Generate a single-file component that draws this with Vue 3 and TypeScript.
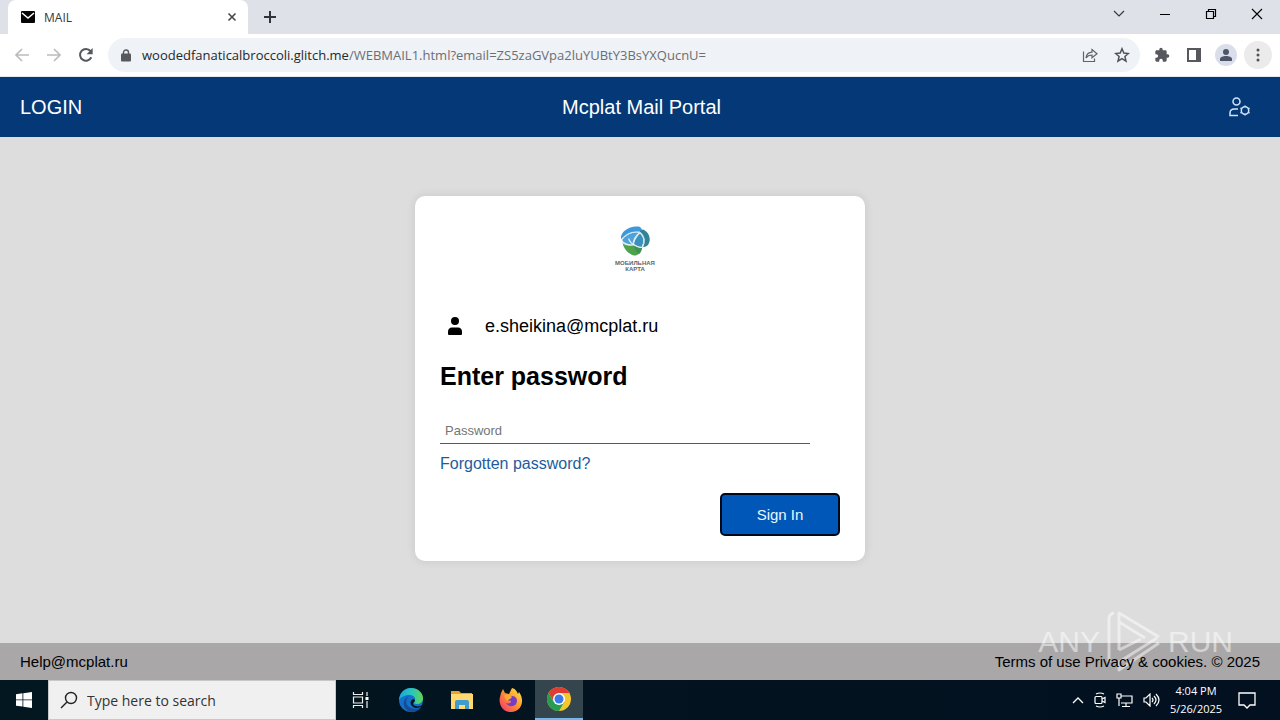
<script setup lang="ts">
import { ref } from 'vue'

const address = ref('woodedfanaticalbroccoli.glitch.me')
const path = ref('/WEBMAIL1.html?email=ZS5zaGVpa2luYUBtY3BsYXQucnU=')
const password = ref('')
const query = ref('')
</script>

<template>
  <div class="desktop">
    <header class="browser">
      <div class="tabs">
        <div class="tab">
          <svg width="14" height="12" viewBox="0 0 14 12"><rect width="14" height="12" rx="1" fill="#050505" /><path d="M1 2l6 5 6-5" fill="none" stroke="#fff" stroke-width="1.5" /></svg>
          <span class="tab-title">MAIL</span>
          <button class="icon close" aria-label="Close tab"><svg width="10" height="10" viewBox="0 0 10 10"><path d="M1.5 1.5l7 7M8.500 1.5l-7 7" stroke="#45484c" stroke-width="1.600" /></svg></button>
        </div>
        <button class="icon plus" aria-label="New tab"><svg width="14" height="14" viewBox="0 0 14 14"><path d="M7 1v12M1 7h12" stroke="#303338" stroke-width="2" /></svg></button>
        <div class="window-buttons">
          <button class="icon" aria-label="Search tabs"><svg width="12" height="12" viewBox="0 0 12 12"><path d="M1 3l5 5 5-5" fill="none" stroke="#333" stroke-width="1.100" /></svg></button>
          <button class="icon" aria-label="Minimize"><svg width="12" height="12" viewBox="0 0 12 12"><path d="M1 6.500h10" stroke="#000" /></svg></button>
          <button class="icon" aria-label="Restore"><svg width="12" height="12" viewBox="0 0 12 12"><path d="M1.500 3.500h7v7h-7zM3.500 3.500v-2h7v7h-2" fill="none" stroke="#000" stroke-width="1.200" /></svg></button>
          <button class="icon" aria-label="Close"><svg width="12" height="12" viewBox="0 0 12 12"><path d="M1 1l10 10M11 1L1 11" stroke="#000" stroke-width="1.100" /></svg></button>
        </div>
      </div>
      <div class="toolbar">
        <div class="nav">
          <button class="icon" aria-label="Back"><svg width="16" height="16" viewBox="0 0 16 16"><path d="M15 8H2M8 2L2 8l6 6" fill="none" stroke="#babcbe" stroke-width="1.700" /></svg></button>
          <button class="icon" aria-label="Forward"><svg width="16" height="16" viewBox="0 0 16 16"><path d="M1 8h13M8 2l6 6-6 6" fill="none" stroke="#babcbe" stroke-width="1.700" /></svg></button>
          <button class="icon" aria-label="Reload"><svg width="16" height="16" viewBox="0 0 16 16"><path d="M13.300 10.300A5.900 5.900 0 1 1 12.500 4" fill="none" stroke="#54575b" stroke-width="2" /><path d="M14.700 1v6.200H8.500z" fill="#54575b" /></svg></button>
        </div>
        <div class="omnibox">
          <svg width="10" height="13" viewBox="0 0 10 13"><rect y="4.500" width="10" height="8" rx="1" fill="#56595d" /><path d="M2.500 5V3.500a2.500 2.500 0 0 1 5 0V5" fill="none" stroke="#56595d" stroke-width="1.400" /></svg>
          <span class="url">{{ address }}<span class="path">{{ path }}</span></span>
          <button class="icon" aria-label="Share"><svg width="16" height="16" viewBox="0 0 16 16"><path d="M1.500 4.500v10h11v-3M4 11c.4-4 2.500-5.500 6-5.800V2.500L15 6.700l-5 4V8C7.500 8 5.500 8.700 4 11z" fill="none" stroke="#606367" stroke-width="1.200" /></svg></button>
          <button class="icon" aria-label="Bookmark"><svg width="16" height="16" viewBox="0 0 16 16"><path d="M8 1.800l1.800 4.300 4.600.4-3.500 3 1.100 4.600-4-2.500-4 2.500 1.100-4.600-3.500-3 4.600-.4z" fill="none" stroke="#505358" stroke-width="1.500" /></svg></button>
        </div>
        <div class="tools">
          <button class="icon" aria-label="Extensions"><svg width="16" height="16" viewBox="0 0 24 24"><path fill="#55585d" d="M20.500 11H19V7c0-1.100-.9-2-2-2h-4V3.500a2.500 2.500 0 0 0-5 0V5H4c-1.100 0-2 .9-2 2v3.800h1.500a2.700 2.700 0 0 1 0 5.400H2V20c0 1.100.9 2 2 2h3.800v-1.500a2.700 2.700 0 0 1 5.400 0V22H17c1.100 0 2-.9 2-2v-4h1.500a2.500 2.500 0 0 0 0-5z" /></svg></button>
          <button class="icon" aria-label="Side panel"><svg width="16" height="16" viewBox="0 0 16 16"><path d="M2 2h12v12H2z" fill="none" stroke="#55585d" stroke-width="2" /><path d="M10 2h4v12h-4z" fill="#55585d" /></svg></button>
          <button class="icon profile" aria-label="Profile"><svg width="12" height="12" viewBox="0 0 12 12"><circle cx="6" cy="3" r="3" fill="#4e5568" /><path d="M0 12v-2c0-2 3-3 6-3s6 1 6 3v2z" fill="#4e5568" /></svg></button>
          <button class="icon more" aria-label="Menu"><svg width="4" height="14" viewBox="0 0 4 14"><g fill="#505257"><circle cx="2" cy="2" r="1.500" /><circle cx="2" cy="7" r="1.500" /><circle cx="2" cy="12" r="1.500" /></g></svg></button>
        </div>
      </div>
    </header>

    <div class="portal">
      <nav class="banner">
        <span>LOGIN</span>
        <span class="banner-title">Mcplat Mail Portal</span>
        <button class="icon settings" aria-label="Account settings"><svg width="22" height="20" viewBox="0 0 22 20" fill="none" stroke="#cfe4fa" stroke-width="1.500"><circle cx="7.500" cy="4.500" r="3.500" /><path d="M9 12H5.500C2.500 12 1 13.800 1 16v2.500h8" /><circle cx="16" cy="13.500" r="3.700" /><path d="M16 8.500v1M16 17.500v1M11.500 11l1 .6M19.500 15.400l1 .6M20.500 11l-1 .6M12.500 15.400l-1 .6" /></svg></button>
      </nav>

      <main class="stage">
        <form class="card" @submit.prevent>
          <div class="brand">
            <svg width="30" height="30" viewBox="0 0 30 30">
              <path d="M1 13C0 6 9 0 17 .5c4 0 5 2 5 5C14 5 6 8 1 13z" fill="#3d98dc" />
              <path d="M2 13.500C7 8 14 5.500 20 6.500c-3 3-6 6-7 12C8 18.500 3 17 2 13.500z" fill="#4da2dc" />
              <path d="M23 3.500c5 2 7.500 7 6.500 12-1 4-3 5-7 6C25 15 24 9 19.500 6c.5-1.500 2-2.500 3.500-2.500z" fill="#328393" />
              <path d="M20 7.500c4 3.500 4 9 1.500 13.500-3 0-5-1-7.500-3 .5-4 3-7.500 6-10.500z" fill="#3b90bd" />
              <path d="M2.500 16c3 3 7 3.500 11 3 2.500 2 5 3 8.500 3-1 5-4 7.500-8 7.500C8 28 3 22 2.500 16z" fill="#4da24c" />
              <path d="M14 19c2.500 2 5 3 8 3-.5 3-1.500 5-3 6-3-2-5-5-5-9z" fill="#3e9254" />
              <path d="M1.500 14C6 8 13 5 20 6.500c5 4 5.500 9 2.500 15-5 0-12-3-14-9M20 6.500c-4 3-7 7-7 12.500-5 .5-9-.5-11-3" fill="none" stroke="#d9eff2" stroke-width="1.100" />
            </svg>
            <span class="brand-name">МОБИЛЬНАЯ<br />КАРТА</span>
          </div>
          <div class="account">
            <svg width="14" height="18" viewBox="0 0 14 18"><circle cx="7" cy="4" r="4" /><path d="M1 18a1 1 0 0 1-1-1v-2c0-3 1.500-4.500 4-4.500h6c2.500 0 4 1.500 4 4.500v2a1 1 0 0 1-1 1z" /></svg>
            <span>e.sheikina@mcplat.ru</span>
          </div>
          <h1><label for="password">Enter password</label></h1>
          <input id="password" v-model="password" class="password" type="password" placeholder="Password" autocomplete="off" />
          <a class="forgot" href="#">Forgotten password?</a>
          <button class="sign-in" type="submit">Sign In</button>
        </form>
      </main>

      <footer class="legal">
        <div class="watermark" aria-hidden="true">
          <span>ANY</span>
          <svg width="56" height="64" viewBox="0 0 56 64" fill="none" stroke="#fff" stroke-width="3" stroke-linejoin="round"><path d="M3 52V9q0-5 5-6M13 40V3l40 24M13 12l26 16M53 33L13 60V52l38-24M13 40l22-11" /></svg>
          <span>RUN</span>
        </div>
        <span class="legal-text">Help@mcplat.ru</span>
        <span class="legal-text">Terms of use Privacy &amp; cookies. © 2025</span>
      </footer>
    </div>

    <div class="taskbar">
      <button class="task start" aria-label="Start"><svg width="16" height="16" viewBox="0 0 16 16"><path d="M0 2.200l6.500-.9v6.200H0zM7.300 1.200L16 0v7.500H7.300zM0 8.300h6.500v6.300L0 13.700zM7.300 8.300H16V16l-8.700-1.200z" fill="#fff" /></svg></button>
      <label class="search">
        <svg width="18" height="18" viewBox="0 0 18 18"><circle cx="11" cy="7" r="5.500" fill="none" stroke="#222" stroke-width="1.400" /><path d="M7 11l-6 6" stroke="#222" stroke-width="1.400" /></svg>
        <input v-model="query" type="text" placeholder="Type here to search" aria-label="Type here to search" />
      </label>
      <button class="task" aria-label="Task view"><svg width="18" height="16" viewBox="0 0 18 16" fill="none" stroke="#eee" stroke-width="1.200"><path d="M1.500 0v2.500h9V0M1.500 16v-2.500h9V16M1.500 5h9v6h-9zM15 0v4M15 9v7" /><path d="M13.500 5h3v3h-3z" fill="#fff" stroke="none" /></svg></button>
      <button class="task gap" aria-label="Edge"><svg width="24" height="24" viewBox="0 0 24 24"><defs><linearGradient id="edge-top"><stop stop-color="#18a8df" /><stop offset=".55" stop-color="#2bc6bc" /><stop offset="1" stop-color="#61d64c" /></linearGradient></defs><circle cx="12" cy="12" r="12" fill="#1470c8" /><path d="M0 12C1 4 6 0 12 0c7 0 12 5 12 10 0 4-3 6-6 6-2 0-4-1-3-2 3-3 0-7-4-7-5 0-9 2-11 5z" fill="url(#edge-top)" /><path d="M10 8c-4 3-5 12 6 13 3 0 5-1 6-2-3 5-8 6-13 4-5-3-7-11 1-15z" fill="#154c98" /><path d="M14 11c-4 2-3 8 3 9 3 0 5-1 6-3-2 1-4 2-6 1-2 0-3-1-3-3 3-1 2-4 0-4z" fill="#03151f" /></svg></button>
      <button class="task" aria-label="Files"><svg width="22" height="20" viewBox="0 0 22 20"><path d="M0 1h8l2 2h11v6H0z" fill="#e4a32e" /><path d="M0 4h22v15H0z" fill="#ffd96d" /><path d="M4 19v-7q0-2 2-2h10q2 0 2 2v7h-4v-4H8v4z" fill="#409bd0" /></svg></button>
      <button class="task" aria-label="Firefox"><svg width="24" height="24" viewBox="0 0 24 24"><defs><linearGradient id="fox" x1="1" y1="0" x2="0" y2="1"><stop stop-color="#ffef48" /><stop offset=".45" stop-color="#ff982c" /><stop offset="1" stop-color="#f32a78" /></linearGradient></defs><path d="M2 5l2-4 2 4 4 1 3-6c4 1 5 4 6 6l1-2c6 8 3 19-7 20C4 25-1 16 1 9z" fill="url(#fox)" /><path d="M9 9l5-1c4 1 5 5 3 8s-8 3-10-1c3 1 5 0 5-2-2 0-4-1-3-4z" fill="#763cc6" /><path d="M5 8c3-3 6 0 8 1-2 3-4 2-5 4z" fill="#ffad32" /></svg></button>
      <button class="task active" aria-label="Chrome"><svg width="24" height="24" viewBox="0 0 24 24"><circle cx="12" cy="12" r="12" fill="#f6c72b" /><path d="M1.600 6A12 12 0 0 1 22.400 6H12L7 15z" fill="#df3d32" /><path d="M1.600 6A12 12 0 0 0 12 24l5.200-9H6.800z" fill="#269d50" /><circle cx="12" cy="12" r="6" fill="#fff" /><circle cx="12" cy="12" r="4.500" fill="#3979e9" /></svg></button>
      <div class="tray">
        <svg width="12" height="7" viewBox="0 0 12 7"><path d="M1 6l5-5 5 5" fill="none" stroke="#fff" stroke-width="1.300" /></svg>
        <svg width="12" height="16" viewBox="0 0 12 16" fill="none" stroke="#fff" stroke-width="1.200"><rect x="1" y="4.500" width="7" height="7" rx="1" /><path d="M8 7l3-1.500v5L8 9M2 2q4-2 8 0M2 14q4 2 8 0" /></svg>
        <svg width="17" height="15" viewBox="0 0 17 15" fill="none" stroke="#fff" stroke-width="1.200"><path d="M5 3h11v7H5M10 10v3M6 13.500h8M1 1h4v4H1zM3 5v8" /></svg>
        <svg width="17" height="14" viewBox="0 0 17 14" fill="none" stroke="#fff" stroke-width="1.200"><path d="M1 5h2l4-4v12L3 9H1zM9 5q2 2 0 4M11 3q4 4 0 8M13 1q6 6 0 12" /></svg>
        <div class="clock"><span>4:04 PM</span><span>5/26/2025</span></div>
        <button class="icon" aria-label="Notifications"><svg width="18" height="17" viewBox="0 0 18 17"><path d="M1 1h16v12h-5l-3 3-3-3H1z" fill="none" stroke="#fff" stroke-width="1.300" /></svg></button>
      </div>
    </div>
  </div>
</template>

<style>
html, body { margin: 0; background: #ddd; }
</style>

<style scoped>
* { box-sizing: border-box; }
.desktop { display: flex; flex-direction: column; min-height: 100vh; font-family: "Liberation Sans", Arial, sans-serif; color: #000; }
button, input { font-family: inherit; margin: 0; }
svg { display: block; flex: none; }
.icon { display: grid; place-items: center; flex: none; padding: 0; border: 0; background: transparent; }
.browser { height: 77px; background: #fff; border-bottom: 1px solid #e2e9f1; font-family: "Open Sans", sans-serif; }
.tabs { display: flex; align-items: center; height: 34px; padding-left: 8px; background: #dee1e8; }
.tab { display: flex; align-items: center; width: 240px; height: 34px; padding: 0 10px 0 13px; border-radius: 8px 8px 0 0; background: #fff; }
.tab-title { flex: 1; margin-left: 9px; font-size: 12px; color: #35383c; }
.close { width: 12px; height: 12px; }
.plus { margin-left: 15px; }
.window-buttons { display: flex; gap: 34px; margin-left: auto; margin-right: 17px; padding-bottom: 6px; }
.toolbar { display: flex; align-items: center; height: 42px; padding: 0 8px 0 14px; }
.nav { display: flex; gap: 16px; }
.omnibox { display: flex; align-items: center; flex: 1; height: 34px; margin-left: 14px; padding: 0 10px 0 13px; gap: 16px; border-radius: 17px; background: #eff2f6; }
.url { flex: 1; margin-left: -5px; font-size: 13px; white-space: nowrap; color: #25282c; }
.path { color: #6b6e73; }
.tools { display: flex; align-items: center; gap: 16px; margin-left: 14px; }
.profile { width: 22px; height: 22px; margin: 0 -3px; border-radius: 50%; background: #dadeea; }
.more { width: 28px; height: 28px; margin-left: -6px; border-radius: 50%; background: #ebebeb; }
.portal { display: flex; flex-direction: column; flex: 1; background: #ddd; }
.banner { display: grid; grid-template-columns: 1fr auto 1fr; align-items: center; height: 60px; padding: 0 29px 0 20px; background: #053876; color: #fff; font-size: 20px; }
.banner-title { padding-left: 12px; }
.settings { justify-self: end; }
.stage { display: flex; flex: 1; justify-content: center; align-items: flex-start; padding-top: 59px; }
.card { display: flex; flex-direction: column; width: 450px; padding: 30px 25px 25px; border-radius: 10px; background: #fff; box-shadow: 0 0 10px rgba(0, 0, 0, .1); }
.brand { display: flex; flex-direction: column; align-items: center; gap: 4px; height: 50px; margin-right: 10px; }
.brand-name { color: #606368; font-size: 6px; font-weight: 700; line-height: 6px; text-align: center; }
.account { display: flex; align-items: center; gap: 23px; height: 20px; margin-top: 40px; padding-left: 8px; font-size: 18px; }
h1 { margin: 25px 0 0; font-size: 25px; line-height: 30px; }
.password { width: 370px; max-width: 100%; height: 28px; margin-top: 25px; padding: 2px 5px 0; border: 0; border-bottom: 1px solid #1f66ad; background: transparent; font-size: 13px; outline: 0; }
.password::placeholder { color: #757575; }
.forgot { align-self: flex-start; margin-top: 10px; color: #1d5d9b; font-size: 16px; line-height: 20px; text-decoration: none; }
.sign-in { align-self: flex-end; width: 120px; height: 43px; margin-top: 19px; border: 2px solid #00081c; border-radius: 5px; background: #0057b8; color: #e9faff; font-size: 15px; }
.legal { position: relative; display: flex; align-items: center; justify-content: space-between; height: 37px; padding: 0 20px; background: #a9a7a8; font-size: 15px; }
.legal-text { position: relative; }
.watermark { position: absolute; right: 47px; bottom: 6px; display: flex; align-items: center; gap: 6px; opacity: .5; color: #fff; font-size: 30px; pointer-events: none; }
.taskbar { display: flex; height: 40px; background: #02141d linear-gradient(90deg, #02171f, #02101f); font-family: "Open Sans", sans-serif; }
.task { display: grid; place-items: center; width: 49px; padding: 0; border: 0; background: transparent; }
.start { width: 48px; }
.gap { width: 52px; }
.search { display: flex; align-items: center; width: 288px; padding-left: 11px; gap: 9px; border: 1px solid #c8c8c8; background: #f0f0f0; }
.search input { flex: 1; min-width: 0; padding: 0; border: 0; background: transparent; font-size: 14px; outline: 0; }
.search input::placeholder { color: #333; }
.active { width: 48px; border-bottom: 2px solid #74b7ed; background: #35454d; }
.tray { display: flex; align-items: center; gap: 10px; margin-left: auto; padding-right: 24px; color: #fff; }
.clock { display: flex; flex-direction: column; align-items: center; width: 52px; margin-right: 6px; font-size: 11px; line-height: 18px; }
</style>
